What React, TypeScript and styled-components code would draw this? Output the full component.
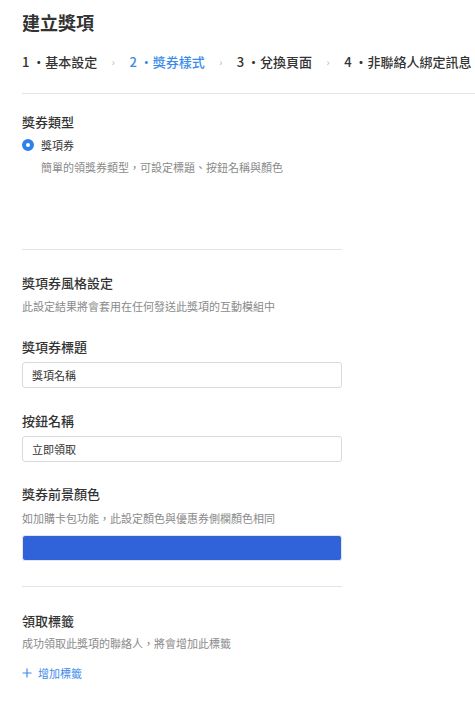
import { Fragment } from "react";
import styled, { createGlobalStyle } from "styled-components";

const GlobalStyle = createGlobalStyle`
  body {
    margin: 0;
    background: #fff;
    font-family: "Noto Sans CJK TC", "Noto Sans", sans-serif;
    color: #333;
  }
`;

const Page = styled.div`
  padding: 10px 0 0 22px;
  width: 453px;
  overflow: hidden;
`;

const Title = styled.h1`
  margin: 0;
  font-size: 18px;
  line-height: 24px;
  font-weight: 700;
  color: #333;
`;

const Steps = styled.ol`
  list-style: none;
  margin: 18px 0 0;
  padding: 0;
  display: flex;
  align-items: center;
  gap: 14.5px;
  white-space: nowrap;
`;

interface IStep {
  active?: boolean;
}
const Step = styled.li<IStep>`
  font-size: 13px;
  line-height: 20px;
  font-weight: 500;
  color: ${(props) => (props.active ? "#3b8beb" : "#333")};
`;

const Chevron = styled.span`
  font-size: 10px;
  line-height: 20px;
  color: #b5b5b5;
`;

const TopRule = styled.hr`
  margin: 21px 0 0;
  border: 0;
  border-top: 1px solid #e5e5e5;
`;

const Form = styled.div`
  width: 320px;
`;

interface IGap {
  gap?: number;
}

const Heading = styled.h3<IGap>`
  margin: ${(props) => props.gap ?? 0}px 0 0;
  font-size: 13px;
  line-height: 20px;
  font-weight: 500;
  color: #333;
`;

const Hint = styled.p<IGap>`
  margin: ${(props) => props.gap ?? 4}px 0 0;
  font-size: 11px;
  line-height: 18px;
  color: #8a8a8a;
`;

const RadioRow = styled.label`
  margin-top: 4px;
  display: flex;
  align-items: center;
  gap: 7px;
  font-size: 11px;
  line-height: 18px;
  color: #333;
`;

const RadioDot = styled.span`
  box-sizing: border-box;
  width: 12px;
  height: 12px;
  border-radius: 50%;
  border: 4px solid #2f80ed;
  background: #fff;
`;

const Indented = styled(Hint)`
  padding-left: 19px;
`;

const Rule = styled.hr<IGap>`
  margin: ${(props) => props.gap}px 0 0;
  border: 0;
  border-top: 1px solid #e5e5e5;
`;

const Input = styled.div`
  box-sizing: border-box;
  margin-top: 5px;
  height: 26px;
  padding: 0 9px;
  border: 1px solid #d9d9d9;
  border-radius: 3px;
  font-size: 11px;
  line-height: 24px;
  color: #333;
`;

const Swatch = styled.div`
  box-sizing: border-box;
  margin-top: 8px;
  height: 26px;
  border: 1px solid #e3e6ee;
  border-radius: 3px;
  background: #3063d9;
`;

const AddTag = styled.button`
  margin-top: 12px;
  padding: 0;
  border: 0;
  background: none;
  display: flex;
  align-items: center;
  gap: 6px;
  font-family: inherit;
  font-size: 11px;
  line-height: 18px;
  color: #3b8beb;
  cursor: pointer;
`;

const steps = ["1 ・基本設定", "2 ・獎券樣式", "3 ・兌換頁面", "4 ・非聯絡人綁定訊息"];

const App = () => {
  return (
    <Page>
      <GlobalStyle />
      <Title>建立獎項</Title>
      <Steps>
        {steps.map((s, i) => (
          <Fragment key={s}>
            {i > 0 && <Chevron>›</Chevron>}
            <Step active={i === 1}>{s}</Step>
          </Fragment>
        ))}
      </Steps>
      <TopRule />
      <Form>
        <Heading gap={18}>獎券類型</Heading>
        <RadioRow>
          <RadioDot />
          獎項券
        </RadioRow>
        <Indented>簡單的領獎券類型，可設定標題、按鈕名稱與顏色</Indented>
        <Rule gap={73} />

        <Heading gap={23}>獎項券風格設定</Heading>
        <Hint>此設定結果將會套用在任何發送此獎項的互動模組中</Hint>

        <Heading gap={22}>獎項券標題</Heading>
        <Input>獎項名稱</Input>

        <Heading gap={23}>按鈕名稱</Heading>
        <Input>立即領取</Input>

        <Heading gap={22}>獎券前景顏色</Heading>
        <Hint gap={5}>如加購卡包功能，此設定顏色與優惠券側欄顏色相同</Hint>
        <Swatch />
        <Rule gap={25} />

        <Heading gap={24}>領取標籤</Heading>
        <Hint gap={3}>成功領取此獎項的聯絡人，將會增加此標籤</Hint>
        <AddTag>
          <svg width="10" height="10" viewBox="0 0 10 10">
            <path d="M5 0.5v9M0.5 5h9" stroke="currentColor" strokeWidth="1.2" fill="none" />
          </svg>
          增加標籤
        </AddTag>
      </Form>
    </Page>
  );
};

export default App;
